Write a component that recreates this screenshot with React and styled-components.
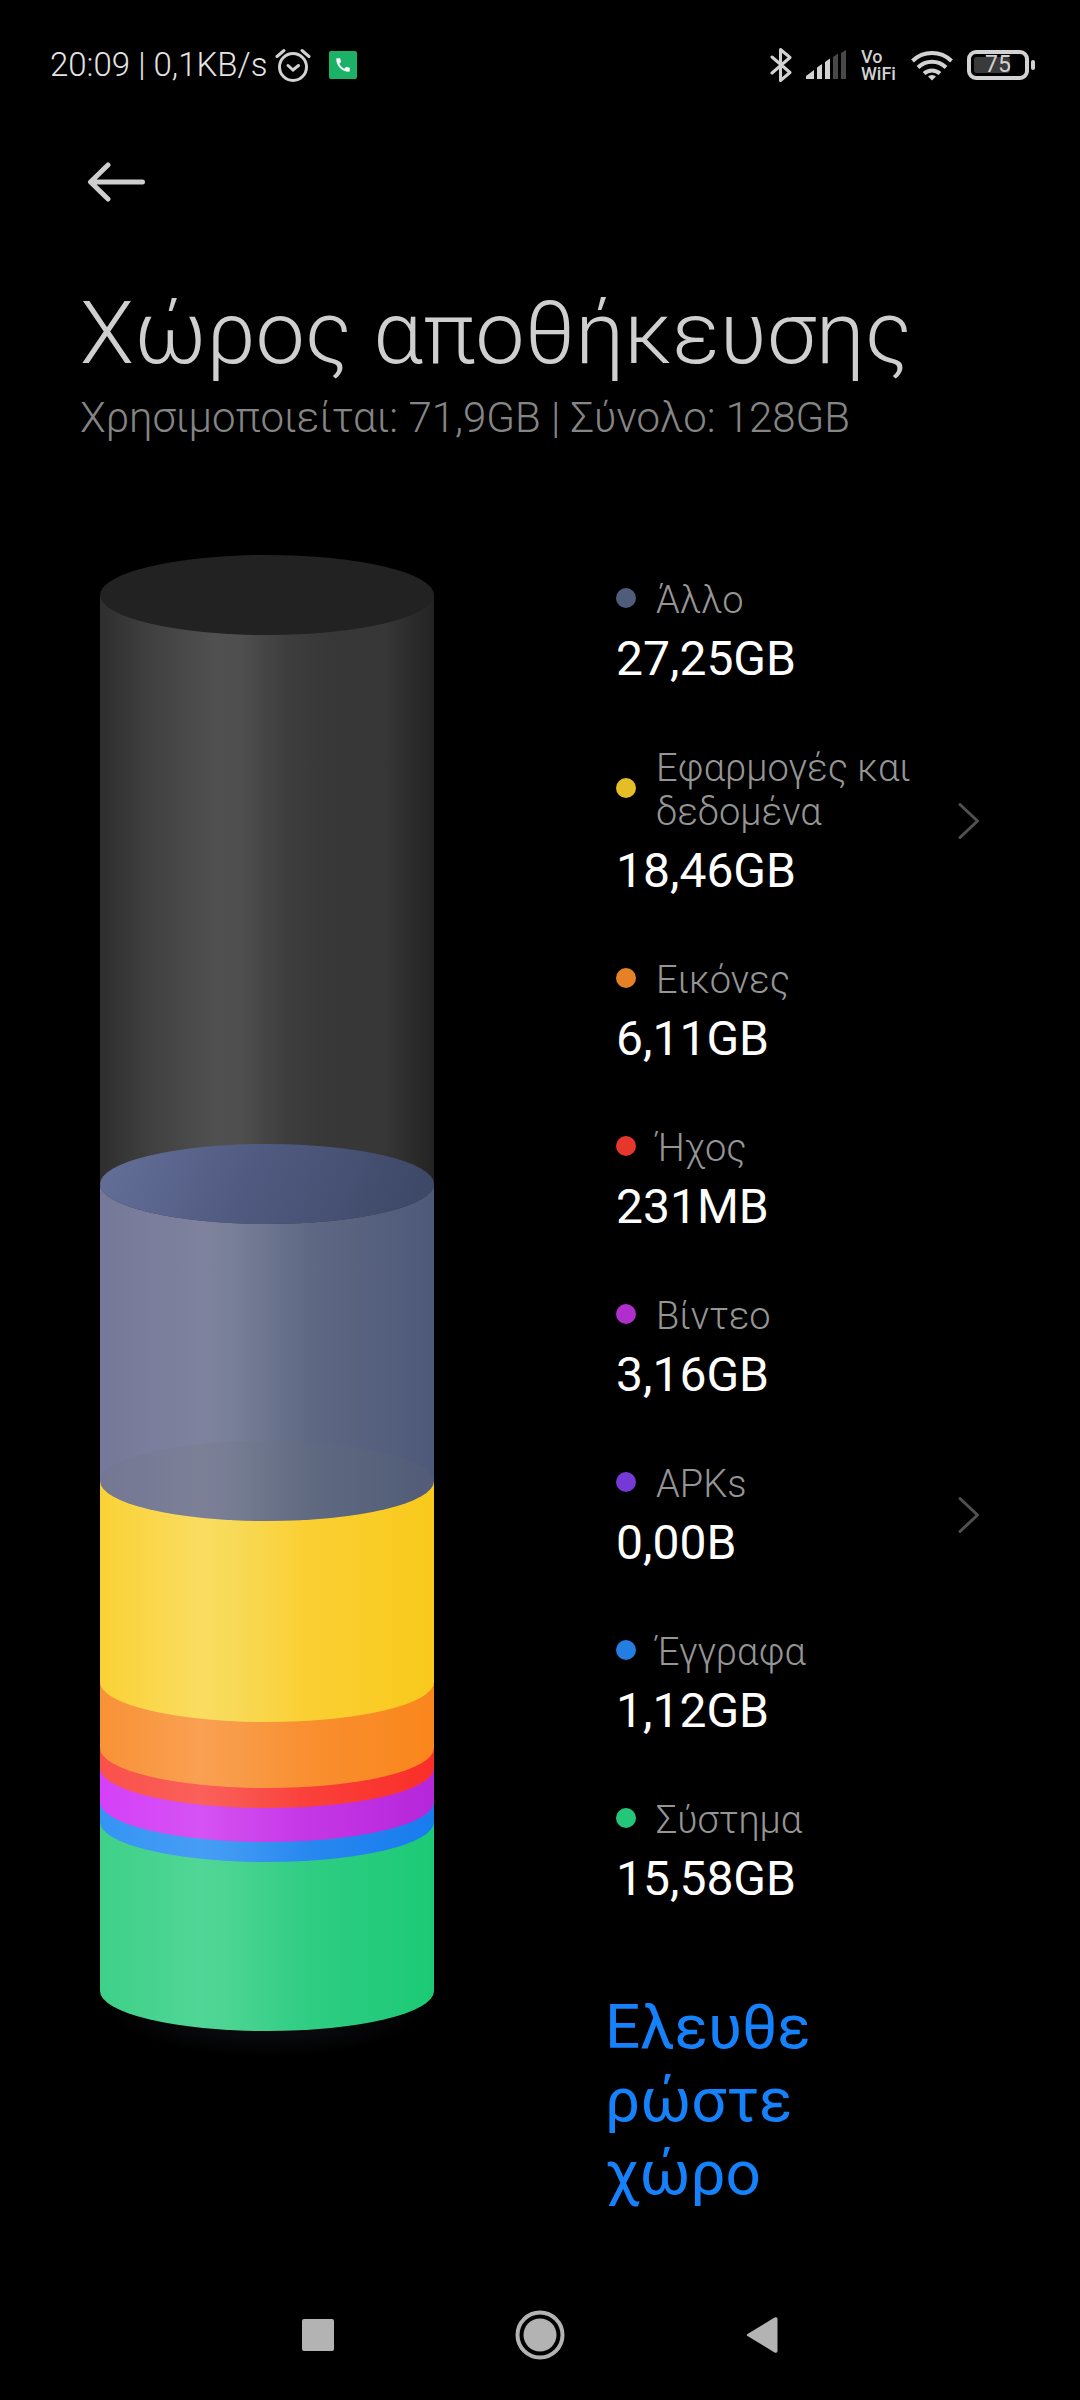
import styled, { createGlobalStyle } from 'styled-components'
import { MdCall } from 'react-icons/md'

const GlobalStyle = createGlobalStyle`
  * {
    box-sizing: border-box;
  }

  body {
    margin: 0;
    background: #000;
    font-family: Roboto, 'Noto Sans', sans-serif;
  }

  button {
    padding: 0;
    border: 0;
    background: none;
    color: inherit;
    font: inherit;
    text-align: left;
  }
`

const Screen = styled.div`
  display: flex;
  flex-direction: column;
  min-height: 100vh;
  background: #000;
  color: #fff;
`

const StatusBar = styled.div`
  display: flex;
  align-items: center;
  justify-content: space-between;
  height: 130px;
  padding: 0 45px 0 50px;
  color: #d2d2d2;
`

const StatusGroup = styled.div`
  display: flex;
  align-items: center;
  gap: ${(props) => props.$gap}px;
`

const Clock = styled.span`
  font-size: 33px;
  font-weight: 360;
  line-height: 40px;
  white-space: nowrap;
  color: #e4e4e4;
`

const CallBadge = styled.span`
  display: flex;
  align-items: center;
  justify-content: center;
  width: 28px;
  height: 28px;
  margin-left: 10px;
  border-radius: 2px;
  background: #1bb267;
  color: #fff;
`

const VoWifi = styled.span`
  display: flex;
  flex-direction: column;
  width: 36px;
  font-size: 18px;
  font-weight: 500;
  line-height: 17px;
`

const Battery = styled.span`
  display: flex;
  align-items: center;
  gap: 2px;
`

const BatteryBody = styled.span`
  position: relative;
  display: flex;
  align-items: center;
  justify-content: center;
  width: 62px;
  height: 30px;
  border: 4px solid #d2d2d2;
  border-radius: 9px;
  font-size: 23px;
  line-height: 24px;
`

const BatteryFill = styled.span`
  position: absolute;
  left: 3px;
  top: 3px;
  bottom: 3px;
  border-radius: 3px;
  background: #3a3a3a;
`

const BatteryLevel = styled.span`
  position: relative;
`

const BatteryTip = styled.span`
  width: 4px;
  height: 10px;
  border-radius: 2px;
  background: #d2d2d2;
`

const Header = styled.header`
  padding: 24px 80px 0;
`

const BackButton = styled.button`
  display: block;
  height: 58px;
  padding-left: 7px;
`

const Title = styled.h1`
  margin: 69px 0 8px;
  font-size: 88px;
  font-weight: 285;
  line-height: 104px;
  color: #cfcfcf;
`

const Subtitle = styled.p`
  margin: 0;
  font-size: 42px;
  font-weight: 320;
  line-height: 50px;
  color: #858585;
`

const Content = styled.main`
  display: flex;
  justify-content: space-between;
  align-items: flex-start;
  padding: 112px 100px 0;
`

const Side = styled.div`
  width: 375px;
  padding-top: 23px;
`

const Legend = styled.ul`
  display: flex;
  flex-direction: column;
  gap: 58px;
  margin: 0;
  padding: 0 0 0 11px;
  list-style: none;
`

const Row = styled.div`
  display: flex;
  align-items: center;
  justify-content: space-between;
  width: 100%;
`

const Info = styled.span`
  display: flex;
  flex-direction: column;
  gap: 8px;
`

const Label = styled.span`
  display: flex;
  align-items: center;
  gap: 20px;
  max-width: 310px;
  font-size: 38px;
  font-weight: 300;
  line-height: 44px;
  color: #959595;
`

const Dot = styled.span`
  flex: none;
  width: 20px;
  height: 20px;
  margin-bottom: 4px;
  border-radius: 50%;
  background: ${(props) => props.$color};
`

const Value = styled.span`
  font-size: 48px;
  font-weight: 370;
  line-height: 58px;
`

const Chevron = styled.svg`
  flex: none;
  margin-bottom: 4px;
`

const CleanButton = styled.button`
  width: 216px;
  margin-top: 82px;
  font-size: 62px;
  font-weight: 370;
  line-height: 73px;
  color: #1582fb;
  overflow-wrap: anywhere;
`

const NavBar = styled.nav`
  display: flex;
  justify-content: center;
  align-items: center;
  gap: 172px;
  height: 130px;
  margin-top: auto;
`

const NavButton = styled.button`
  display: flex;
  justify-content: center;
  width: 50px;
`

const categories = [
  { label: 'Άλλο', value: '27,25GB', color: '#4f5d7b' },
  { label: 'Εφαρμογές και δεδομένα', value: '18,46GB', color: '#e5bd27', link: true },
  { label: 'Εικόνες', value: '6,11GB', color: '#e68225' },
  { label: 'Ήχος', value: '231MB', color: '#e5372c' },
  { label: 'Βίντεο', value: '3,16GB', color: '#b02fcc' },
  { label: 'APKs', value: '0,00B', color: '#753ad6', link: true },
  { label: 'Έγγραφα', value: '1,12GB', color: '#247de1' },
  { label: 'Σύστημα', value: '15,58GB', color: '#24c67a' },
]

// bottom to top, colours run left edge, highlight, highlight end, shade, right edge
const layers = [
  { id: 'system', from: 1267, to: 1436, colors: ['#3ed088', '#50d696', '#4ad492', '#2fcd83', '#1cca75'] },
  { id: 'docs', from: 1247, to: 1267, colors: ['#3494f4', '#469df5', '#3f99f3', '#2888f0', '#187cee'] },
  { id: 'video', from: 1213, to: 1247, colors: ['#d540f8', '#d552f4', '#d04aee', '#c437e6', '#b626da'] },
  { id: 'audio', from: 1193, to: 1213, colors: ['#fa504a', '#fb605a', '#fa5852', '#fa403a', '#fa2e28'] },
  { id: 'images', from: 1127, to: 1193, colors: ['#f89236', '#faa052', '#f99c4a', '#f98f30', '#fa861c'] },
  { id: 'apps', from: 926, to: 1127, colors: ['#fad236', '#fadc60', '#f8da58', '#facf32', '#f9ca1c'] },
  { id: 'other', from: 629, to: 926, colors: ['#757898', '#7f829e', '#787f98', '#5f6984', '#4e597a'] },
]

const stops = [0, 0.3, 0.4, 0.62, 1]

function side(from, to) {
  return `M0 ${from} V${to} A167 40 0 0 0 334 ${to} V${from} Z`
}

function StorageChart() {
  return (
    <svg width="334" height="1510" viewBox="0 0 334 1510" role="img" aria-label="Χώρος αποθήκευσης">
      <defs>
        {layers.map((layer) => (
          <linearGradient id={layer.id} key={layer.id} gradientUnits="userSpaceOnUse" x1="0" x2="334" y1="0" y2="0">
            {layer.colors.map((color, i) => (
              <stop key={i} offset={stops[i]} stopColor={color} />
            ))}
          </linearGradient>
        ))}
        <linearGradient id="free" gradientUnits="userSpaceOnUse" x1="0" x2="334" y1="0" y2="0">
          <stop offset="0" stopColor="#2e2e2e" />
          <stop offset="0.15" stopColor="#404040" />
          <stop offset="0.34" stopColor="#505050" />
          <stop offset="0.42" stopColor="#4f4f4f" />
          <stop offset="0.56" stopColor="#3d3d3d" />
          <stop offset="0.7" stopColor="#373737" />
          <stop offset="0.85" stopColor="#373737" />
          <stop offset="1" stopColor="#232323" />
        </linearGradient>
        <linearGradient id="surface" x1="0" x2="1" y1="0" y2="0.1">
          <stop offset="0" stopColor="#65709a" />
          <stop offset="0.5" stopColor="#505a80" />
          <stop offset="1" stopColor="#3e4968" />
        </linearGradient>
        <radialGradient id="glow">
          <stop offset="0.6" stopColor="#08090c" />
          <stop offset="1" stopColor="#000" />
        </radialGradient>
      </defs>
      <ellipse cx="167" cy="1452" rx="160" ry="50" fill="url(#glow)" />
      {layers.map((layer) => (
        <path key={layer.id} d={side(layer.from, layer.to)} fill={`url(#${layer.id})`} />
      ))}
      <ellipse cx="167" cy="926" rx="167" ry="40" fill="#6c7068" fillOpacity="0.12" />
      <path d={side(40, 629)} fill="url(#free)" />
      <ellipse cx="167" cy="629" rx="167" ry="40" fill="url(#surface)" />
      <ellipse cx="167" cy="40" rx="167" ry="40" fill="#222" />
    </svg>
  )
}

function AlarmIcon() {
  return (
    <svg width="36" height="36" viewBox="0 0 36 36" fill="none" stroke="currentColor" strokeWidth="3" strokeLinecap="round">
      <circle cx="18" cy="20" r="13.5" />
      <path d="M13 18.5l5 4.5 5.5-4.5M2 9.5l7-6M34 9.5l-7-6" />
    </svg>
  )
}

function BluetoothIcon() {
  return (
    <svg width="22" height="36" viewBox="0 0 22 36" fill="none" stroke="currentColor" strokeWidth="3" strokeLinejoin="round" strokeLinecap="round">
      <path d="M2 10l18 15.5-9.5 8V2.5l9.500 8L2 26" />
    </svg>
  )
}

function SignalIcon() {
  return (
    <svg width="41" height="30" viewBox="0 0 41 30" fill="currentColor">
      <path d="M0 29v-3l8-6v9zM11 29V17.500l5-3.500v15zM19 29V12l5-3.500v20.500z" />
      <path d="M27 29V7l5-3.500v25.500zM35 29V3l5-3v29z" fill="#484848" />
    </svg>
  )
}

function WifiIcon() {
  return (
    <svg width="42" height="31" viewBox="0 0 42 31" fill="none" stroke="currentColor" strokeWidth="4">
      <path d="M1.500 11a28 28 0 0 1 39 0M7 17.500a20 20 0 0 1 28 0M13 23.500a12 12 0 0 1 16 0" />
      <path d="M21 30.500l-4-4a6 6 0 0 1 8 0z" fill="currentColor" stroke="none" />
    </svg>
  )
}

function LegendRow({ item }) {
  return (
    <li>
      <Row as={item.link ? 'button' : 'div'}>
        <Info>
          <Label>
            <Dot $color={item.color} />
            <span>{item.label}</span>
          </Label>
          <Value>{item.value}</Value>
        </Info>
        {item.link && (
          <Chevron width="22" height="38" viewBox="0 0 22 38" fill="none" stroke="#505050" strokeWidth="3" strokeLinecap="round" strokeLinejoin="round">
            <path d="M2 2.500l17.500 16.500L2 35.500" />
          </Chevron>
        )}
      </Row>
    </li>
  )
}

function App() {
  const battery = 75

  return (
    <>
      <GlobalStyle />
      <Screen>
        <StatusBar>
          <StatusGroup $gap={8}>
            <Clock>20:09 | 0,1KB/s</Clock>
            <AlarmIcon />
            <CallBadge>
              <MdCall size={18} />
            </CallBadge>
          </StatusGroup>
          <StatusGroup $gap={14}>
            <BluetoothIcon />
            <SignalIcon />
            <VoWifi>
              <span>Vo</span>
              <span>WiFi</span>
            </VoWifi>
            <WifiIcon />
            <Battery>
              <BatteryBody>
                <BatteryFill style={{ width: `${battery * 0.9}%` }} />
                <BatteryLevel>{battery}</BatteryLevel>
              </BatteryBody>
              <BatteryTip />
            </Battery>
          </StatusGroup>
        </StatusBar>

        <Header>
          <BackButton aria-label="Πίσω">
            <svg width="60" height="44" viewBox="0 0 60 44" fill="none" stroke="#cfcfcf" strokeWidth="5" strokeLinecap="round" strokeLinejoin="round">
              <path d="M55.500 23H4M21 6L3.500 23L21 40" />
            </svg>
          </BackButton>
          <Title>Χώρος αποθήκευσης</Title>
          <Subtitle>Χρησιμοποιείται: 71,9GB | Σύνολο: 128GB</Subtitle>
        </Header>

        <Content>
          <StorageChart />
          <Side>
            <Legend>
              {categories.map((item) => (
                <LegendRow key={item.label} item={item} />
              ))}
            </Legend>
            <CleanButton>Ελευθερώστε χώρο</CleanButton>
          </Side>
        </Content>

        <NavBar>
          <NavButton aria-label="Πρόσφατα">
            <svg width="32" height="32" viewBox="0 0 32 32">
              <rect width="32" height="32" rx="2" fill="#b3b3b3" />
            </svg>
          </NavButton>
          <NavButton aria-label="Αρχική">
            <svg width="50" height="50" viewBox="0 0 50 50">
              <circle cx="25" cy="25" r="22.500" fill="none" stroke="#b3b3b3" strokeWidth="4" />
              <circle cx="25" cy="25" r="16.500" fill="#b3b3b3" />
            </svg>
          </NavButton>
          <NavButton aria-label="Πίσω">
            <svg width="32" height="38" viewBox="0 0 32 38">
              <path d="M28.500 1.500L1.500 18q-1.500 1 0 2L28.500 36.500q3 1 3-1.500V3q0-2.500-3-1.500z" fill="#b3b3b3" />
            </svg>
          </NavButton>
        </NavBar>
      </Screen>
    </>
  )
}

export default App
